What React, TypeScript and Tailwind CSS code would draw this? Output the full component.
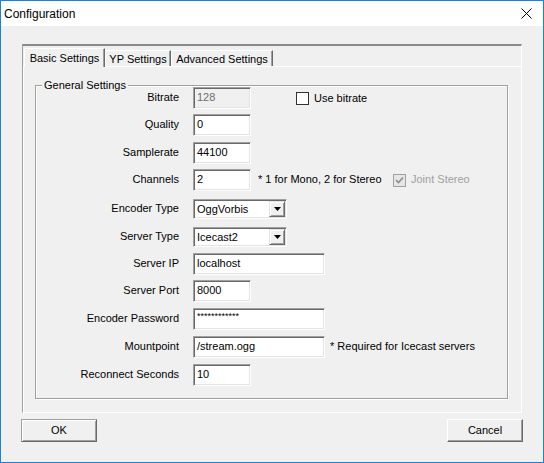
import React from 'react';

const sunken =
  "border border-t-[#a0a0a0] border-l-[#a0a0a0] border-r-white border-b-white shadow-[inset_1px_1px_0_#696969,inset_-1px_-1px_0_#e3e3e3]";

function TextBox({ wClass, value, disabled, small }: { wClass: string; value: string; disabled?: boolean; small?: boolean }) {
  return (
    <div
      className={`${sunken} ${wClass} h-[22px] flex pl-[3px] ${small ? 'items-start pt-[3px] text-[9px] leading-[9px]' : 'items-center pb-[1px]'} ${
        disabled ? 'bg-[#f0f0f0] text-[#6d6d6d]' : 'bg-white text-black'
      }`}
    >
      {value}
    </div>
  );
}

function Combo({ value }: { value: string }) {
  return (
    <div className={`${sunken} w-[94px] h-[20px] bg-white flex items-center pl-[3px] pr-[1px]`}>
      <span className="flex-1">{value}</span>
      <div className="w-[16px] h-[16px] bg-[#f0f0f0] border border-t-[#e3e3e3] border-l-[#e3e3e3] border-r-[#696969] border-b-[#696969] shadow-[inset_1px_1px_0_#fff,inset_-1px_-1px_0_#a0a0a0] flex items-center justify-center">
        <svg width="7" height="4" viewBox="0 0 7 4">
          <polygon points="0,0 7,0 3.5,4" fill="#000" />
        </svg>
      </div>
    </div>
  );
}

function CheckBox({ checked, disabled }: { checked?: boolean; disabled?: boolean }) {
  return (
    <div
      className={`w-[13px] h-[13px] border flex items-center justify-center ${
        disabled ? 'border-[#a0a0a0] bg-[#e6e6e6]' : 'border-[#333333] bg-white'
      }`}
    >
      {checked && (
        <svg width="9" height="9" viewBox="0 0 9 9">
          <polyline points="1,4 3.5,6.5 8,1.5" fill="none" stroke={disabled ? '#8c8c8c' : '#000'} strokeWidth="1.6" />
        </svg>
      )}
    </div>
  );
}

function Row({ label, mt, h, children }: { label: string; mt: string; h: string; children: React.ReactNode }) {
  return (
    <div className={`flex items-center ${mt} ${h}`}>
      <div className="w-[143px] text-right pb-[2px]">{label}</div>
      <div className="ml-[14px] flex items-center">{children}</div>
    </div>
  );
}

export default function App() {
  return (
    <div className="w-[544px] h-[463px] border border-[#1883d7] bg-[#f0f0f0] flex flex-col font-['Liberation_Sans',Arial,sans-serif] text-[11px] leading-[13px] text-black select-none">
      {/* Title bar */}
      <div className="h-[25px] bg-white flex items-center justify-between pl-[3px] pr-[11px]">
        <span className="text-[12px] leading-[16px]">Configuration</span>
        <svg width="11" height="11" viewBox="0 0 11 11">
          <line x1="0.5" y1="0.5" x2="10.5" y2="10.5" stroke="#000" strokeWidth="1" />
          <line x1="10.5" y1="0.5" x2="0.5" y2="10.5" stroke="#000" strokeWidth="1" />
        </svg>
      </div>

      {/* Frame */}
      <div className="ml-[21px] mt-[18px] w-[500px] h-[369px] border-t-2 border-l border-r border-b border-t-[#8a8a8a] border-l-[#a0a0a0] border-r-white border-b-white flex flex-col">
        {/* Tabs */}
        <div className="flex items-end h-[20px] pl-[1px]">
          <div className="relative z-10 -mb-[1px] w-[81px] h-[19px] bg-[#f0f0f0] border-l border-t border-r border-l-white border-t-white border-r-[#696969] shadow-[inset_-1px_0_0_#a0a0a0] flex items-center justify-center">
            Basic Settings
          </div>
          <div className="w-[66px] h-[16px] border-l border-t border-r border-l-white border-t-white border-r-[#696969] shadow-[inset_-1px_0_0_#a0a0a0] flex items-center justify-center pt-[1px]">
            YP Settings
          </div>
          <div className="w-[102px] h-[16px] border-l border-t border-r border-l-white border-t-white border-r-[#696969] shadow-[inset_-1px_0_0_#a0a0a0] flex items-center justify-center pt-[1px]">
            Advanced Settings
          </div>
        </div>

        {/* Page */}
        <div className="flex-1 border-t border-l border-white pl-[11px] pt-[18px]">
          <div className="relative w-[473px] h-[314px] border border-[#a0a0a0] shadow-[1px_1px_0_#fff,inset_1px_1px_0_#fff] flex flex-col">
            <span className="absolute left-[6px] -top-[7px] px-[2px] bg-[#f0f0f0] leading-[13px]">General Settings</span>

            <Row label="Bitrate" mt="mt-[1px]" h="h-[22px]">
              <TextBox wClass="w-[58px]" value="128" disabled />
              <div className="ml-[45px] flex items-center">
                <CheckBox />
                <span className="ml-[5px]">Use bitrate</span>
              </div>
            </Row>
            <Row label="Quality" mt="mt-[5px]" h="h-[22px]">
              <TextBox wClass="w-[58px]" value="0" />
            </Row>
            <Row label="Samplerate" mt="mt-[6px]" h="h-[22px]">
              <TextBox wClass="w-[58px]" value="44100" />
            </Row>
            <Row label="Channels" mt="mt-[5px]" h="h-[22px]">
              <TextBox wClass="w-[58px]" value="2" />
              <span className="ml-[7px] w-[135px] pb-[1px]">* 1 for Mono, 2 for Stereo</span>
              <div className="flex items-center">
                <CheckBox checked disabled />
                <span className="ml-[5px] text-[#a0a0a0] pb-[1px]">Joint Stereo</span>
              </div>
            </Row>
            <Row label="Encoder Type" mt="mt-[8px]" h="h-[20px]">
              <Combo value="OggVorbis" />
            </Row>
            <Row label="Server Type" mt="mt-[8px]" h="h-[20px]">
              <Combo value="Icecast2" />
            </Row>
            <Row label="Server IP" mt="mt-[6px]" h="h-[22px]">
              <TextBox wClass="w-[132px]" value="localhost" />
            </Row>
            <Row label="Server Port" mt="mt-[5px]" h="h-[22px]">
              <TextBox wClass="w-[58px]" value="8000" />
            </Row>
            <Row label="Encoder Password" mt="mt-[6px]" h="h-[22px]">
              <TextBox wClass="w-[132px]" value="************" small />
            </Row>
            <Row label="Mountpoint" mt="mt-[6px]" h="h-[22px]">
              <TextBox wClass="w-[132px]" value="/stream.ogg" />
              <span className="ml-[5px] pb-[1px]">* Required for Icecast servers</span>
            </Row>
            <Row label="Reconnect Seconds" mt="mt-[6px]" h="h-[22px]">
              <TextBox wClass="w-[58px]" value="10" />
            </Row>
          </div>
        </div>
      </div>

      {/* Buttons */}
      <div className="flex justify-between mt-[6px] ml-[20px] mr-[20px]">
        <button className="w-[76px] h-[23px] bg-[#f0f0f0] border border-t-[#a0a0a0] border-l-[#a0a0a0] border-r-[#696969] border-b-[#696969] shadow-[inset_1px_1px_0_#fff,inset_-1px_-1px_0_#a0a0a0] flex items-center justify-center text-[11px]">
          OK
        </button>
        <button className="w-[76px] h-[23px] bg-[#f0f0f0] border border-t-white border-l-white border-r-[#696969] border-b-[#696969] shadow-[inset_-1px_-1px_0_#a0a0a0] flex items-center justify-center text-[11px]">
          Cancel
        </button>
      </div>
    </div>
  );
}
